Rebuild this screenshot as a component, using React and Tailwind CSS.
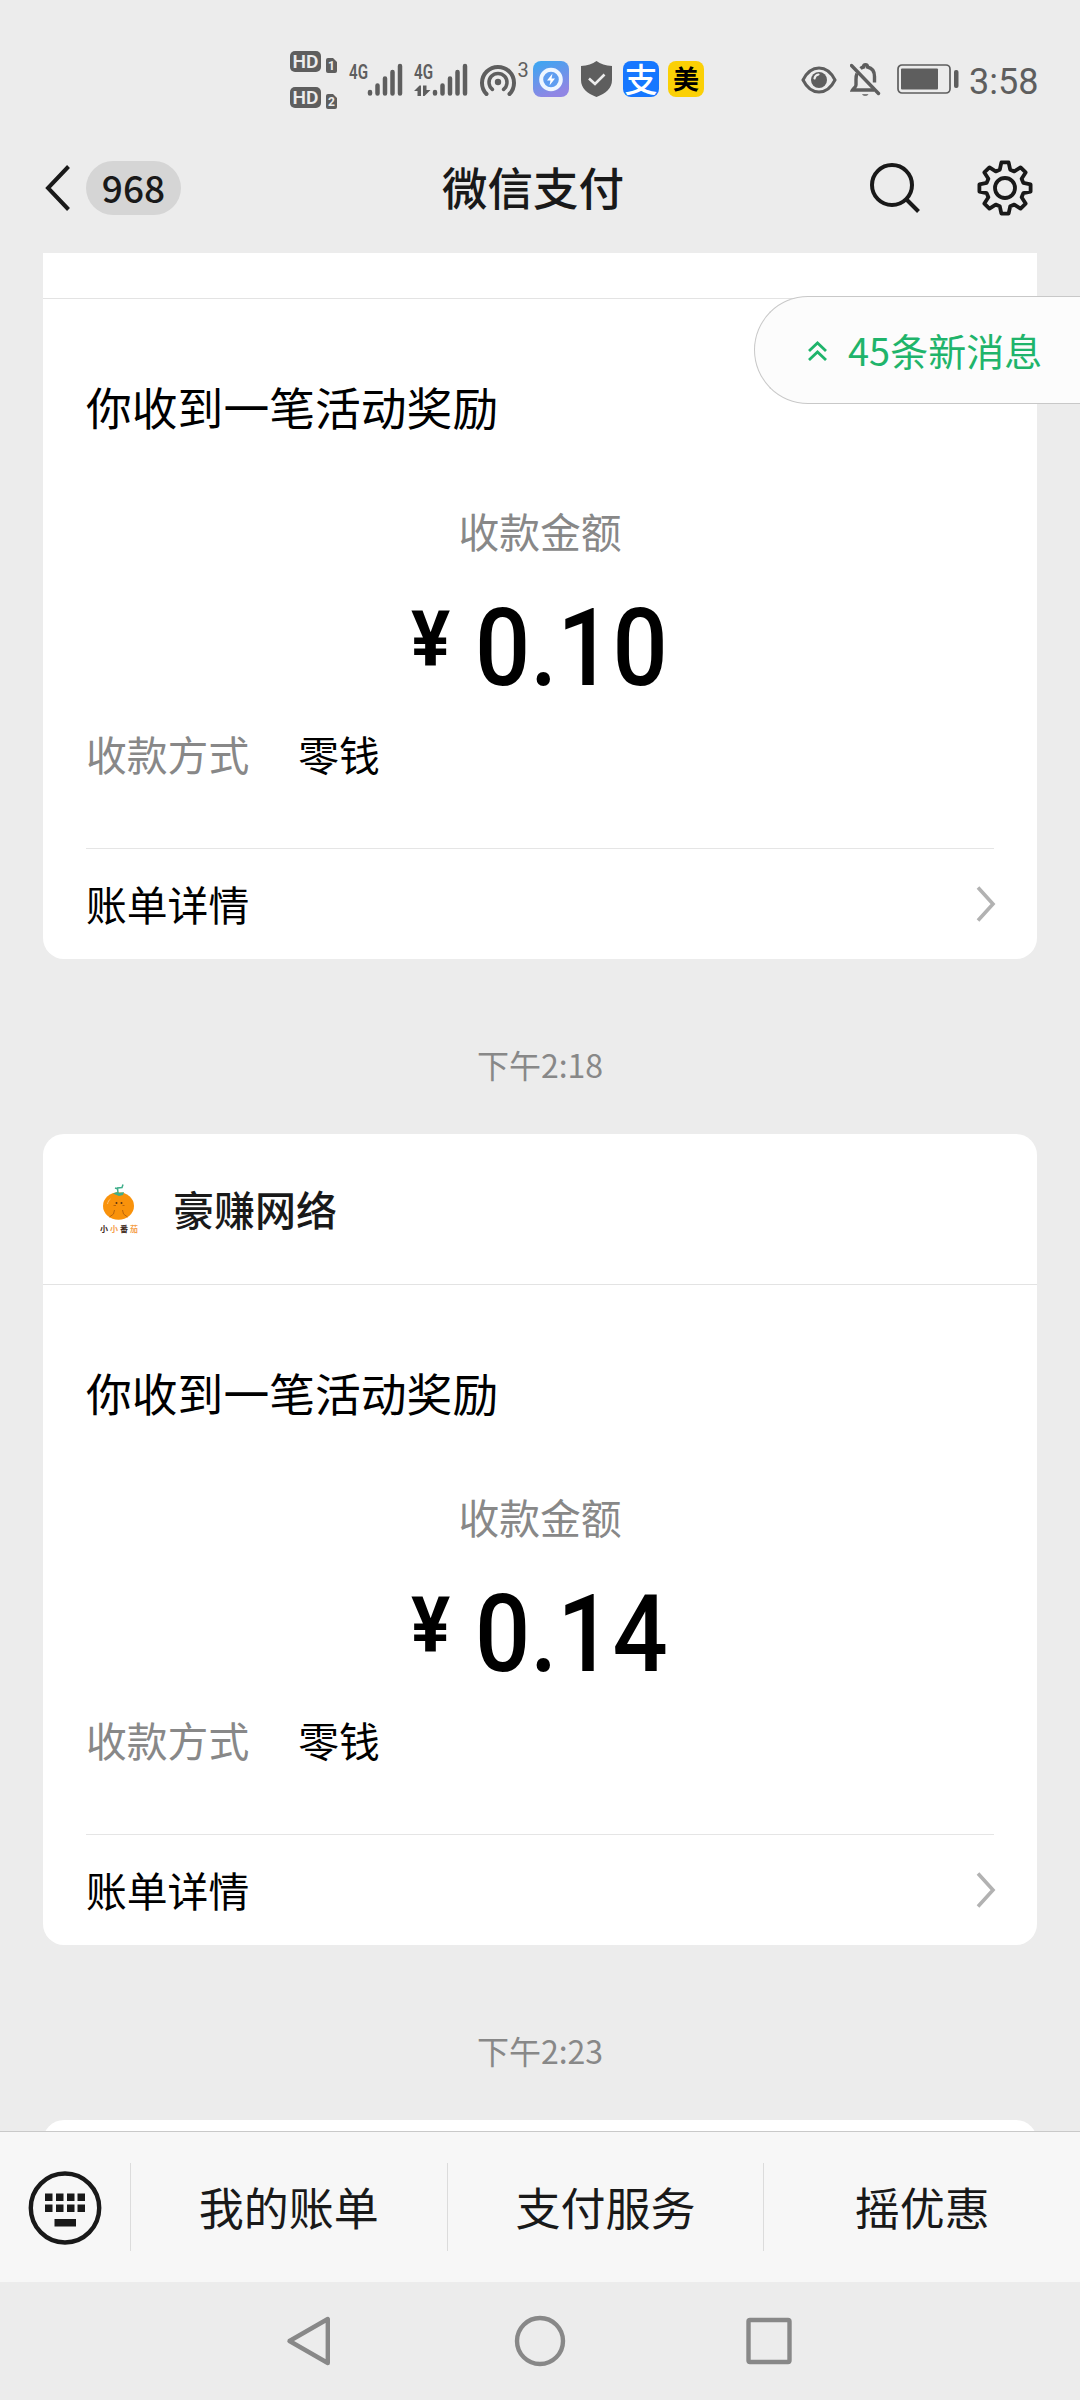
import { Fragment } from "react";

const payments = [
  { id: 1, amount: "0.10", time: "下午2:18" },
  { id: 2, name: "豪赚网络", amount: "0.14", time: "下午2:23" },
];

const menu = ["我的账单", "支付服务", "摇优惠"];

function HdBadge({ sim }) {
  return (
    <svg className="overflow-visible" width="48" height="22" viewBox="0 0 48 22">
      <rect x="0" y="0" width="31" height="21" rx="5" fill="#5e5e5e" />
      <text x="15.500" y="17.300" textAnchor="middle" fontSize="19" fontWeight="600" textLength="26" lengthAdjust="spacingAndGlyphs" fill="#ececec">
        HD
      </text>
      <path d="M36 9a2 2 0 0 1 2-2h5l4 4v9a2 2 0 0 1-2 2h-7a2 2 0 0 1-2-2z" fill="#5e5e5e" />
      <text x="41.500" y="19" textAnchor="middle" fontSize="12" fontWeight="700" fill="#ececec">
        {sim}
      </text>
    </svg>
  );
}

function Signal({ data }) {
  return (
    <svg className="overflow-visible" width="54" height="34" viewBox="0 0 54 34">
      <text x="0" y="15.500" fontSize="20" fontWeight="600" textLength="19" lengthAdjust="spacingAndGlyphs" fill="#5e5e5e">
        4G
      </text>
      {data && (
        <path d="M0 28l5.500-5.500h1.500V33H3.500v-5zM9 22.500h3.500V27h4l-6 6H9z" fill="#5e5e5e" />
      )}
      <g stroke="#5e5e5e" strokeWidth="4.500" strokeLinecap="round">
        <path d="M21 29v1.500M28.500 22.500v8M36 15.500v15M43.500 9v21.500M51 3v27.500" />
      </g>
    </svg>
  );
}

function StatusBar() {
  return (
    <div className="flex h-[156px] items-center pl-[290px] font-[Roboto,sans-serif]">
      <div className="flex flex-col gap-[14px] pt-[3px]">
        <HdBadge sim="1" />
        <HdBadge sim="2" />
      </div>
      <div className="ml-[11px] flex gap-[11px] pt-1">
        <Signal />
        <Signal data />
      </div>
      <svg className="ml-[12px] mt-1 overflow-visible" width="50" height="36" viewBox="0 0 50 36" fill="none" stroke="#5e5e5e" strokeWidth="4" strokeLinecap="round">
        <circle cx="18" cy="20" r="3.200" fill="#5e5e5e" stroke="none" />
        <path d="M6.500 32A16 16 0 1 1 29.500 32" />
        <path d="M12.500 27.500A9 9 0 1 1 23.500 27.500" strokeWidth="3.500" />
        <text x="37.500" y="14.500" fontSize="20" stroke="none" fill="#5e5e5e">3</text>
      </svg>
      <svg className="ml-[3px] mt-[2px]" width="36" height="36" viewBox="0 0 36 36">
        <defs>
          <linearGradient id="cleaner" x1="0" y1="0" x2="0.400" y2="1">
            <stop offset="0" stopColor="#38a8f2" />
            <stop offset="1" stopColor="#9086e4" />
          </linearGradient>
        </defs>
        <rect width="36" height="36" rx="8" fill="url(#cleaner)" />
        <circle cx="18" cy="18.500" r="9.800" fill="#5e9df0" stroke="#eef6ff" strokeWidth="4" />
        <path d="M19.500 12.500l-5.500 7h3.500l-1 5 5.500-7h-3.500z" fill="#fff" />
      </svg>
      <svg className="ml-3 mt-[2px]" width="31" height="36" viewBox="0 0 31 36">
        <path d="M15.500 0c4 3 9 4.500 15.500 5v14c0 8-6 13.500-15.500 17C6 32.500 0 27 0 19V5c6.500-.5 11.500-2 15.500-5z" fill="#5e5e5e" />
        <path d="M8 17.500l6 5.500 9.500-9.500" fill="none" stroke="#ececec" strokeWidth="2.600" />
      </svg>
      <span className="ml-[11px] mt-[2px] flex size-9 items-center justify-center rounded-lg bg-[#1677ff] pb-[3px] font-['Noto_Sans_CJK_SC',sans-serif] text-[33px] leading-9 font-medium text-white">
        支
      </span>
      <span className="ml-[9px] mt-[2px] flex size-9 items-center justify-center rounded-lg bg-[#fbd005] pb-[3px] font-['Noto_Sans_CJK_SC',sans-serif] text-[26px] leading-9 font-bold text-black">
        美
      </span>
      <svg className="ml-[97px] mt-[3px]" width="36" height="28" viewBox="0 0 36 28">
        <path d="M2 14C6 6 11.500 2 18 2s12 4 16 12c-4 8-9.500 12-16 12S6 22 2 14z" fill="none" stroke="#5e5e5e" strokeWidth="3" />
        <circle cx="18" cy="14" r="8" fill="#5e5e5e" />
        <path d="M13.500 12.500a5 5 0 0 1 4-4" fill="none" stroke="#ececec" strokeWidth="2.200" strokeLinecap="round" />
      </svg>
      <svg className="ml-[13px] mt-[3px]" width="31" height="34" viewBox="0 0 31 34" fill="none" stroke="#5e5e5e" strokeWidth="3.400">
        <path d="M7 10.500c-.8 1.600-1 3.500-1 6V22c0 2-2.500 3-3.500 5H24" />
        <path d="M10.500 5.500c1-.8 2-1.200 3-1.500 0-1.300.8-2.300 2-2.300s2 1 2 2.300c4.500 1 7 4.500 7 9.500v6" />
        <path d="M1.500 2.500l27 28" strokeLinecap="round" />
        <path d="M12 31.300c1.500 2 5 2 6.500 0z" fill="#5e5e5e" stroke="none" />
      </svg>
      <svg className="ml-[16px] mt-[2px]" width="62" height="30" viewBox="0 0 62 30">
        <rect x="1" y="1" width="52" height="28" rx="4" fill="none" stroke="#5e5e5e" strokeWidth="1.700" />
        <rect x="4" y="4.500" width="37" height="21" rx="1" fill="#5e5e5e" />
        <rect x="57" y="6" width="4.500" height="18" rx="2" fill="#5e5e5e" />
      </svg>
      <span className="ml-[10px] mt-[7px] text-[36px] leading-none text-[#5e5e5e]">3:58</span>
    </div>
  );
}

function Gear() {
  const tooth = [[-5.2, -18.3], [-3.6, -25.6], [3.6, -25.6], [5.2, -18.3]];
  const points = [];
  for (let i = 0; i < 8; i++) {
    const a = (i * Math.PI) / 4;
    tooth.forEach(([x, y]) => {
      const px = 28 + x * Math.cos(a) - y * Math.sin(a);
      const py = 28 + x * Math.sin(a) + y * Math.cos(a);
      points.push(`${px.toFixed(2)},${py.toFixed(2)}`);
    });
  }
  return (
    <svg width="56" height="56" viewBox="0 0 56 56" fill="none" stroke="#191919" strokeWidth="3.800" strokeLinejoin="round">
      <polygon points={points.join(" ")} />
      <circle cx="28" cy="28" r="10" />
    </svg>
  );
}

function Header() {
  return (
    <div className="flex h-[97px] items-start text-[#191919]">
      <div className="flex h-[64px] w-[442px] items-center pl-[45px]">
        <svg width="26" height="46" viewBox="0 0 26 46" fill="none" stroke="#191919" strokeWidth="4">
          <path d="M23.500 1.500L3 23l20.500 21.500" />
        </svg>
        <span className="ml-[15px] flex h-[54px] w-[95px] items-center justify-center rounded-full bg-[#d5d5d5] pb-[1px] text-[37px] font-medium">
          968
        </span>
      </div>
      <h1 className="h-[64px] w-[428px] text-[45.5px] leading-[60px] font-medium">微信支付</h1>
      <div className="flex h-[64px] items-center gap-[57px]">
        <svg width="50" height="50" viewBox="0 0 50 50" fill="none" stroke="#191919" strokeWidth="4">
          <circle cx="22" cy="22" r="20" />
          <path d="M36 36l12.500 12.500" />
        </svg>
        <Gear />
      </div>
    </div>
  );
}

function TomatoLogo() {
  return (
    <svg className="overflow-visible" width="66" height="66" viewBox="0 0 66 66">
      <ellipse cx="32.500" cy="30" rx="15.500" ry="13.700" fill="#f9920b" />
      <path d="M27 17.500l4-1.500 2 1 5-1-1 3-4 1z" fill="#3fae8a" />
      <path d="M32 17l-.5-5 4.500-.5 1-3M32 13l-3-1" fill="none" stroke="#3fae8a" strokeWidth="1.500" />
      <circle cx="30.500" cy="27" r="1" fill="#5a3412" />
      <circle cx="35.500" cy="27" r="1" fill="#5a3412" />
      <path d="M27.500 29.500h2.500M36.500 29.500h2M23.500 41l4-3 1-4M41.500 41l-4-3-1-4" fill="none" stroke="#b9640c" strokeWidth="1" />
      <path d="M21.500 28c.5-2.500 1.500-4 3-5" fill="none" stroke="#fcc277" strokeWidth="1" />
      <g fontSize="8" fontWeight="700">
        <text x="14" y="56" fill="#3d2a20">小</text>
        <text x="24" y="56" fill="#f5a04a">小</text>
        <text x="34" y="56" fill="#3d2a20">番</text>
        <text x="44" y="56" fill="#f5a04a">茄</text>
      </g>
    </svg>
  );
}

function PaymentCard({ name, amount }) {
  return (
    <div className={name ? "mx-[43px] rounded-[21px] bg-white" : "mx-[43px] rounded-b-[21px] bg-white"}>
      {name ? (
        <div className="flex h-[151px] items-center border-b border-[#e3e3e3] pl-[43px]">
          <TomatoLogo />
          <span className="ml-[21px] pb-[1px] text-[41px] font-medium text-[#191919]">{name}</span>
        </div>
      ) : (
        <div className="h-[46px] border-b border-[#e3e3e3]" />
      )}
      <div className="flex h-[660px] flex-col px-[43px] pt-[77px] text-[40.8px]">
        <p className="h-[60px] text-[45.8px] leading-[60px] text-black">你收到一笔活动奖励</p>
        <p className="mt-[70px] h-[50px] text-center leading-[50px] text-[#888]">收款金额</p>
        <div className="mt-[42px] flex h-[100px] pl-[325px] font-[Roboto,sans-serif] text-black">
          <span className="mt-[3px] h-[78px] w-[64px] origin-left scale-x-[0.95] text-[77px] leading-[78px] font-bold">¥</span>
          <span className="w-[192px] origin-left scale-x-90 text-[108px] leading-[100px] font-medium">{amount}</span>
        </div>
        <div className="mt-[31px] flex h-[50px] gap-[49px] leading-[50px]">
          <span className="text-[#888]">收款方式</span>
          <span className="text-black">零钱</span>
        </div>
        <div className="mt-[69px] flex h-[111px] items-center justify-between border-t border-[#e5e5e5]">
          <span className="pb-[1px] text-black">账单详情</span>
          <svg className="-mr-[2px]" width="20" height="36" viewBox="0 0 20 36" fill="none" stroke="#b2b2b2" strokeWidth="3.600">
            <path d="M2 1.500L17 18 2 34.500" />
          </svg>
        </div>
      </div>
    </div>
  );
}

function NewMessages() {
  return (
    <div className="absolute top-[43px] right-0 flex h-[108px] w-[326px] items-center rounded-l-full border border-r-0 border-[#c8c8c8] bg-[#fcfcfc] pl-[53px] text-[#1fb46b]">
      <svg className="mt-[2px]" width="19" height="20" viewBox="0 0 19 20" fill="none" stroke="#1fb46b" strokeWidth="2.800">
        <path d="M1 10l8.500-8 8.500 8M1 19l8.500-8 8.500 8" />
      </svg>
      <span className="ml-[21px] pb-[2px] text-[38px] whitespace-nowrap">45条新消息</span>
    </div>
  );
}

function MenuBar() {
  return (
    <div className="flex h-[151px] items-center border-t border-[#c9c9c9] bg-[#f7f7f7] text-[#191919]">
      <div className="flex w-[130px] justify-center pt-[1px]">
        <svg width="74" height="76" viewBox="0 0 74 76" fill="#191919">
          <ellipse cx="37" cy="38" rx="34.200" ry="34.500" fill="none" stroke="#191919" strokeWidth="4.400" />
          {[17, 28, 39, 49.5].map((x) => (
            <Fragment key={x}>
              <rect x={x} y="23.500" width="7.500" height="7.500" />
              <rect x={x} y="34.500" width="7.500" height="7.500" />
            </Fragment>
          ))}
          <rect x="26.500" y="49" width="21.500" height="7.500" />
        </svg>
      </div>
      {menu.map((item) => (
        <div key={item} className="flex h-[88px] flex-1 items-center justify-center border-l border-[#dcdcdc] text-[45px]">
          {item}
        </div>
      ))}
    </div>
  );
}

function SystemNav() {
  return (
    <div className="flex h-[118px] items-center justify-center">
      <svg width="520" height="60" viewBox="0 0 520 60" fill="none" stroke="#888" strokeWidth="4.400" strokeLinejoin="round">
        <path d="M47.800 8v44L9.500 30z" />
        <circle cx="260" cy="30" r="23" />
        <rect x="468.500" y="9" width="41" height="42" rx="1.500" />
      </svg>
    </div>
  );
}

export default function App() {
  return (
    <div className="flex h-[2400px] w-[1080px] flex-col overflow-hidden bg-[#ececec] font-['Noto_Sans_CJK_SC',sans-serif]">
      <StatusBar />
      <Header />
      <main className="relative h-[1878px] overflow-hidden">
        {payments.map((p) => (
          <Fragment key={p.id}>
            <PaymentCard name={p.name} amount={p.amount} />
            <p className="h-[175px] text-center text-[32px] leading-[210px] text-[#888]">{p.time}</p>
          </Fragment>
        ))}
        <div className="mx-[43px] h-[150px] rounded-[21px] bg-white" />
        <NewMessages />
      </main>
      <MenuBar />
      <SystemNav />
    </div>
  );
}
